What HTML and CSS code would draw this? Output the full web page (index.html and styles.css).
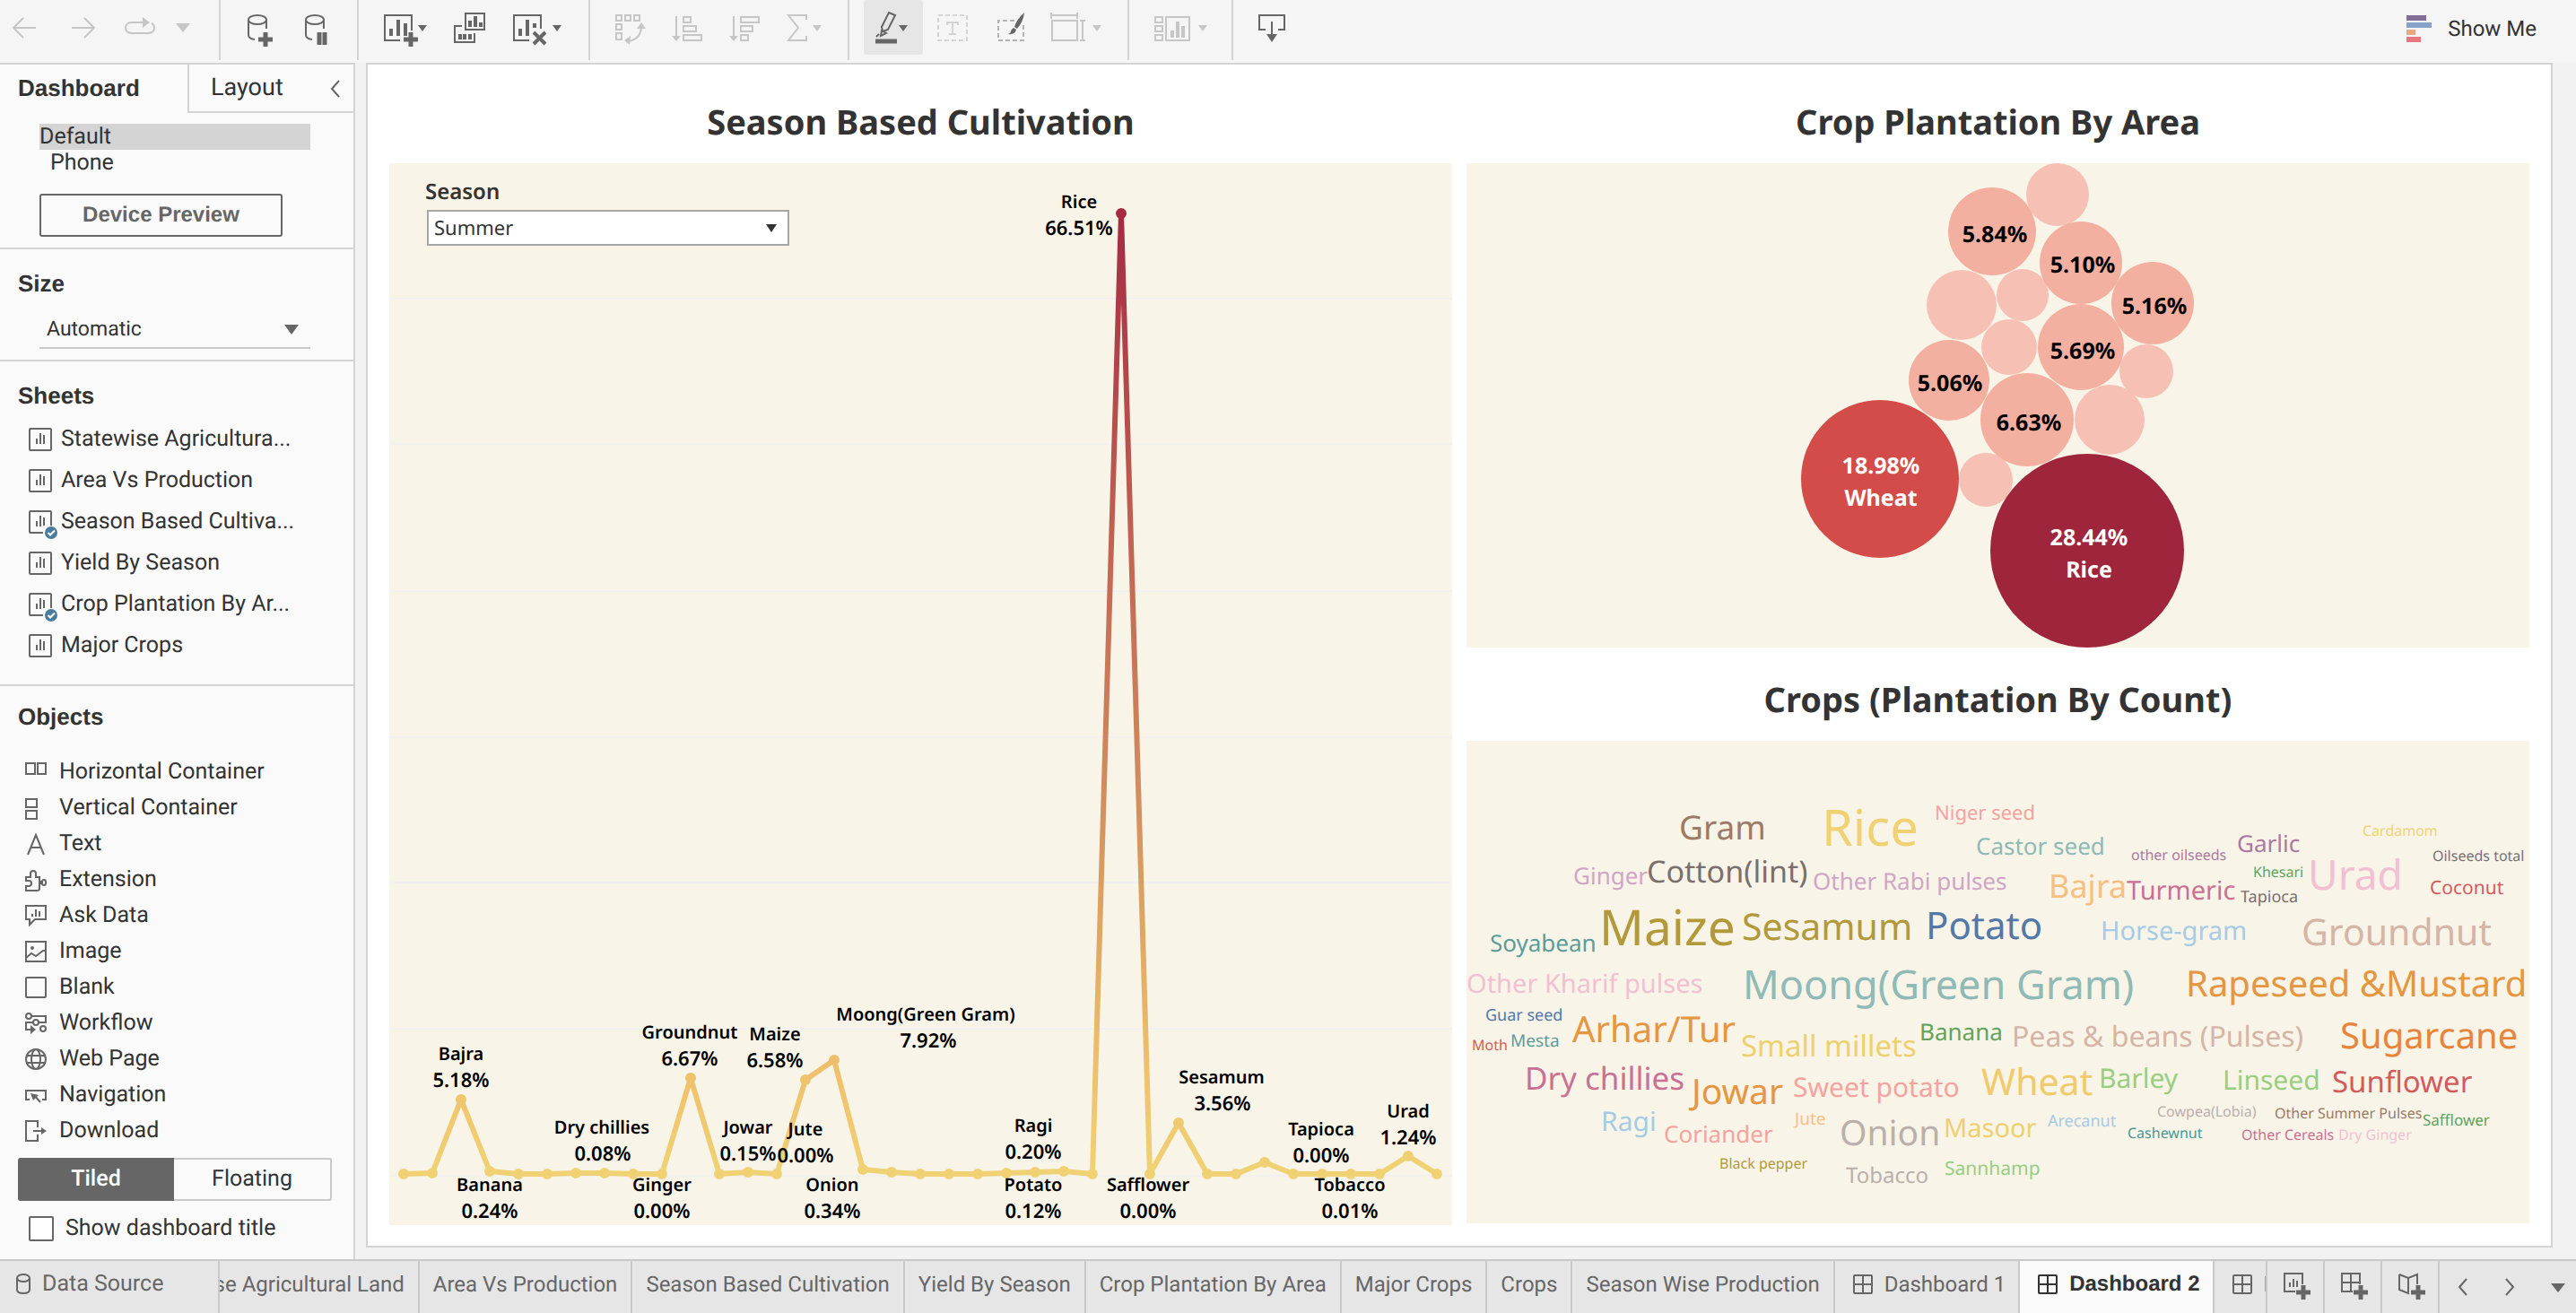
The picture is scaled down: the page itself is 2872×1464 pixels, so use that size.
FILE: index.html
```html
<!DOCTYPE html>
<html lang="en">
<head>
<meta charset="utf-8">
<meta name="viewport" content="width=device-width, initial-scale=1">
<title>Dashboard 2</title>
<link rel="stylesheet" href="styles.css">
</head>
<body>
<svg class="defs" aria-hidden="true">
  <symbol id="sheet" viewBox="0 0 26 26"><rect x="1" y="1" width="24" height="24" rx="1"/><path d="M9 12v6M13 6v12M17 8v10"/></symbol>
  <symbol id="sheet-used" viewBox="0 0 32 32"><path d="M25 17V2a1 1 0 0 0-1-1H2a1 1 0 0 0-1 1v22a1 1 0 0 0 1 1h14M9 12v6M13 6v12M17 8v9"/><circle class="badge" cx="25" cy="25" r="7"/><path class="tick" d="M21.500 25l2.500 2.500 5-5"/></symbol>
  <symbol id="grid" viewBox="0 0 22 22"><rect x="1" y="1" width="20" height="20" rx="1"/><path d="M11 1v20M1 11h20"/></symbol>
</svg>

<header class="toolbar">
  <div class="group group-first">
    <button class="tool off" aria-label="Undo"><svg width="38" height="60"><path d="M26 30H1M12 19L1 30l11 11"/></svg></button>
    <button class="tool off" aria-label="Redo"><svg width="30" height="60"><path d="M0 30h25M14 19l11 11-11 11"/></svg></button>
    <button class="tool off" aria-label="Replay"><svg width="74" height="60"><path d="M25 24H8a6 6 0 0 0-6 6v0a6 6 0 0 0 6 6h20a6 6 0 0 0 6-6v0q0-4-3-5"/><path class="fill" d="M21 18l8 6-8 6zM58 25h16l-8 10z"/></svg></button>
  </div>
  <div class="group">
    <button class="tool" aria-label="New data source"><svg width="38" height="60"><ellipse cx="13" cy="21" rx="10" ry="5"/><path d="M3 21v17q0 4 7 5M23 21v10"/><path class="heavy" d="M22 35v16M14 43h16"/></svg></button>
    <button class="tool" aria-label="Pause auto updates"><svg width="30" height="60"><ellipse cx="11" cy="21" rx="10" ry="5"/><path d="M1 21v17q0 4 7 5M21 21v10"/><path class="heavy" d="M16 35v14M22 35v14"/></svg></button>
  </div>
  <div class="group">
    <button class="tool" aria-label="New worksheet"><svg width="50" height="60"><path d="M31 33V16H1v28h17"/><path class="mid" d="M8 31v8M16 21v18M24 25v14"/><path class="heavy" d="M30 35v16M22 43h16"/><path class="fill" d="M38 27h10l-5 7z"/></svg></button>
    <button class="tool" aria-label="Duplicate"><svg width="38" height="60"><path d="M13 14h21v18H13zM9 28H1v18h22V36"/><path class="mid" d="M18 22v7M24 17v12M30 24v5M7 37v6M12 37v6M18 37v6"/></svg></button>
    <button class="tool" aria-label="Clear sheet"><svg width="56" height="60"><path d="M31 31V16H1v28h17"/><path class="mid" d="M8 31v8M16 21v18M24 25v5M23 35l13 13M36 35L23 48"/><path class="fill" d="M44 27h10l-5 7z"/></svg></button>
  </div>
  <div class="group">
    <button class="tool off" aria-label="Swap"><svg width="35" height="60"><path d="M1 16h6v6H1zM11 16h6v6h-6zM21 16h6v6h-6zM1 26h6v6H1zM1 36h6v7H1zM29 28q0 14-14 17"/><path class="fill" d="M24 31l5-7 5 7zM17 39l-7 5 6 5z"/></svg></button>
    <button class="tool off" aria-label="Sort ascending"><svg width="36" height="60"><path d="M5 17v24M13 18h8v6h-8zM13 28h14v6H13zM13 38h20v6H13z"/><path class="fill" d="M0 39h10l-5 6z"/></svg></button>
    <button class="tool off" aria-label="Sort descending"><svg width="34" height="60"><path d="M5 17v24M13 18h20v6H13zM13 28h13v6H13zM13 38h8v6h-8z"/><path class="fill" d="M0 39h10l-5 6z"/></svg></button>
    <button class="tool off" aria-label="Totals"><svg width="42" height="60"><path d="M24 21v-5H4l11 14L4 44h20v-5"/><path class="fill" d="M31 27h10l-5 7z"/></svg></button>
  </div>
  <div class="group">
    <button class="tool pressed" aria-label="Highlight"><svg width="42" height="60"><path d="M16 13l7 3-8 16-6 2-1-5zM8 33l5 3-6 3zM2 40l3-3"/><path class="heavy" d="M1 45h24"/><path class="fill" d="M27 27h10l-5 7z"/></svg></button>
    <button class="tool faint" aria-label="Show mark labels"><svg width="34" height="60"><rect class="dash" x="1" y="16" width="32" height="28"/><path d="M11 27v-3h12v3M17 24v13M13 37h8"/></svg></button>
    <button class="tool" aria-label="Format"><svg width="36" height="60"><path class="dash dim" d="M24 22H6v22h28V26"/><path class="fill" d="M35 13q-9 8-11 16l3 2q7-8 8-18zM23 30l3 2q-1 6-9 5 3-1 3-3t3-4z"/></svg></button>
    <button class="tool off" aria-label="Fit"><svg width="58" height="60"><path d="M1 13v7M30 13v7M1 16h29M2 22h28v22H2zM33 22h6M33 44h6M36 22v22"/><path class="fill" d="M47 27h10l-5 7z"/></svg></button>
  </div>
  <div class="group">
    <button class="tool off" aria-label="Show cards"><svg width="58" height="60"><path d="M1 18h8v6H1zM1 28h8v6H1zM1 38h8v6H1zM13 18h26v26H13z"/><path class="mid" d="M20 33v8M26 23v18M32 28v13"/><path class="fill" d="M49 27h10l-5 7z"/></svg></button>
  </div>
  <div class="group group-last">
    <button class="tool" aria-label="Download"><svg width="30" height="60"><path d="M8 32H1V16h28v16h-7M15 23v16"/><path class="fill" d="M9 37h12l-6 9z"/></svg></button>
  </div>
  <button class="show-me"><svg width="28" height="30"><rect width="22" height="6" fill="#836f96"/><rect y="8" width="28" height="6" fill="#87a3c8"/><rect y="16" width="10" height="6" fill="#e8a883"/><rect y="24" width="16" height="6" fill="#e9767f"/></svg>Show Me</button>
</header>

<div class="workspace">
  <aside class="sidebar">
    <div class="side-tabs">
      <button class="side-tab active">Dashboard</button>
      <button class="side-tab">Layout</button>
      <button class="collapse" aria-label="Collapse"><svg width="12" height="20"><path d="M10 1L2 10l8 9"/></svg></button>
    </div>
    <section class="devices">
      <ul class="device-list"><li class="selected">Default</li><li class="nested">Phone</li></ul>
      <button class="preview">Device Preview</button>
    </section>
    <section class="size">
      <h2><label for="size">Size</label></h2>
      <span class="picker size-picker"><select id="size"><option>Automatic</option></select></span>
    </section>
    <section class="sheets">
      <h2>Sheets</h2>
      <ul>
        <li><svg class="icon26"><use href="#sheet"/></svg><span>Statewise Agricultura...</span></li>
        <li><svg class="icon26"><use href="#sheet"/></svg><span>Area Vs Production</span></li>
        <li><svg class="icon26"><use href="#sheet-used" width="32" height="32"/></svg><span>Season Based Cultiva...</span></li>
        <li><svg class="icon26"><use href="#sheet"/></svg><span>Yield By Season</span></li>
        <li><svg class="icon26"><use href="#sheet-used" width="32" height="32"/></svg><span>Crop Plantation By Ar...</span></li>
        <li><svg class="icon26"><use href="#sheet"/></svg><span>Major Crops</span></li>
      </ul>
    </section>
    <section class="objects">
      <h2>Objects</h2>
      <ul>
        <li><svg class="icon24"><path d="M1 2h10v12H1zM14 2h9v12h-9z"/></svg>Horizontal Container</li>
        <li><svg class="icon24"><path d="M1 2h12v9H1zM1 15h12v9H1z"/></svg>Vertical Container</li>
        <li><svg class="icon24"><path d="M3 24L12 2l9 22M6 16h12"/></svg>Text</li>
        <li><svg class="icon24"><path d="M1 9h5V5a3 3 0 0 1 6 0v4h4v5h3a2 2 0 0 1 4 0v2a2 2 0 0 1-4 0h-3v6q0 2-3 2H1v-5h3a3 3 0 0 0 0-6H1z"/></svg>Extension</li>
        <li><svg class="icon24"><path d="M1 1h22v15H11l-6 6v-6H1zM8 10v3M12 5v8M16 7v6"/></svg>Ask Data</li>
        <li><svg class="icon24"><path d="M1 1h22v22H1zM1 19l6-5 5 3 8-6h3"/><circle class="fill" cx="8" cy="8" r="2"/></svg>Image</li>
        <li><svg class="icon24"><rect x="1" y="1" width="22" height="22" rx="1"/></svg>Blank</li>
        <li><svg class="icon24"><circle cx="4" cy="4" r="3"/><circle cx="12" cy="11" r="3"/><circle cx="20" cy="18" r="3"/><path d="M7 4h16v7h-8M9 11H1v8h7"/><path class="fill" d="M6 14l6 5-6 5z"/></svg>Workflow</li>
        <li><svg class="icon24"><circle cx="12" cy="12" r="11"/><ellipse cx="12" cy="12" rx="5" ry="11"/><path d="M2 8h20M2 16h20"/></svg>Web Page</li>
        <li><svg class="icon24"><path d="M5 17H1V7h22v10h-4M10 12l7 8"/><path class="fill" d="M6 10l9 2-6 6z"/></svg>Navigation</li>
        <li><svg class="icon24"><path d="M14 8V1H1v22h13v-7M9 12h11"/><path class="fill" d="M18 8l6 4-6 4z"/></svg>Download</li>
      </ul>
      <div class="segmented"><button class="on">Tiled</button><button>Floating</button></div>
      <div class="check"><input type="checkbox" id="title-toggle"><label for="title-toggle">Show dashboard title</label></div>
    </section>
  </aside>

  <main class="canvas">
    <section class="season">
      <h1>Season Based Cultivation</h1>
      <div class="panel">
        <div class="filter">
          <label for="season">Season</label>
          <span class="picker season-picker"><select id="season"><option>Summer</option></select></span>
        </div>
        <svg class="chart" viewBox="0 0 1185 1184" role="img" aria-label="Share of cultivation by crop">
          <defs>
            <linearGradient id="heat" gradientUnits="userSpaceOnUse" x1="0" y1="56" x2="0" y2="1127">
              <stop offset="0" stop-color="#a52a42"/><stop offset=".07" stop-color="#ab3647"/><stop offset=".39" stop-color="#c56b54"/><stop offset=".52" stop-color="#cc7f5b"/><stop offset=".77" stop-color="#e0ab64"/><stop offset=".89" stop-color="#efc06c"/><stop offset="1" stop-color="#f0d274"/>
            </linearGradient>
          </defs>
          <path class="gridline" d="M0 151H1185M0 313H1185M0 477H1185M0 640H1185M0 802H1185M0 965H1185M0 1129H1185"/>
          <path class="line" stroke="url(#heat)" d="M16 1127L48 1126L80 1044L112 1124L144 1127L176 1127L208 1126L240 1126L272 1127L304 1127L336 1020L368 1127L400 1125L432 1127L464 1022L496 1000L528 1122L560 1125L592 1127L624 1127L656 1127L688 1126L720 1125L752 1124L784 1127L816 56L848 1127L880 1070L912 1127L944 1127L976 1114L1008 1127L1040 1127L1072 1127L1104 1127L1136 1107L1168 1127"/>
          <path class="dots" stroke="url(#heat)" d="M16 1127h0M48 1126h0M80 1044h0M112 1124h0M144 1127h0M176 1127h0M208 1126h0M240 1126h0M272 1127h0M304 1127h0M336 1020h0M368 1127h0M400 1125h0M432 1127h0M464 1022h0M496 1000h0M528 1122h0M560 1125h0M592 1127h0M624 1127h0M656 1127h0M688 1126h0M720 1125h0M752 1124h0M784 1127h0M816 56h0M848 1127h0M880 1070h0M912 1127h0M944 1127h0M976 1114h0M1008 1127h0M1040 1127h0M1072 1127h0M1104 1127h0M1136 1107h0M1168 1127h0"/>
          <g class="names">
            <text x="769" y="50">Rice</text><text x="80" y="1000">Bajra</text><text x="112" y="1146">Banana</text><text x="237" y="1082">Dry chillies</text><text x="304" y="1146">Ginger</text><text x="335" y="976">Groundnut</text><text x="430" y="978">Maize</text><text x="400" y="1082">Jowar</text><text x="464" y="1084">Jute</text><text x="494" y="1146">Onion</text><text x="598" y="956">Moong(Green Gram)</text><text x="718" y="1080">Ragi</text><text x="718" y="1146">Potato</text><text x="846" y="1146">Safflower</text><text x="928" y="1026">Sesamum</text><text x="1039" y="1084">Tapioca</text><text x="1136" y="1064">Urad</text><text x="1071" y="1146">Tobacco</text>
          </g>
          <g class="values">
            <text x="769" y="80">66.51%</text><text x="80" y="1030">5.18%</text><text x="112" y="1176">0.24%</text><text x="238" y="1112">0.08%</text><text x="304" y="1176">0.00%</text><text x="335" y="1006">6.67%</text><text x="430" y="1008">6.58%</text><text x="400" y="1112">0.15%</text><text x="464" y="1114">0.00%</text><text x="494" y="1176">0.34%</text><text x="601" y="986">7.92%</text><text x="718" y="1110">0.20%</text><text x="718" y="1176">0.12%</text><text x="846" y="1176">0.00%</text><text x="929" y="1056">3.56%</text><text x="1039" y="1114">0.00%</text><text x="1136" y="1094">1.24%</text><text x="1071" y="1176">0.01%</text>
          </g>
        </svg>
      </div>
    </section>

    <div class="right">
      <section>
        <h1>Crop Plantation By Area</h1>
        <div class="panel">
          <svg class="chart" viewBox="0 0 1185 540" role="img" aria-label="Crop plantation by area">
            <g fill="#f6c1b4"><circle cx="659" cy="35" r="35"/><circle cx="552" cy="158" r="39"/><circle cx="620" cy="147" r="29"/><circle cx="605" cy="205" r="31"/><circle cx="758" cy="232" r="30"/><circle cx="717" cy="286" r="39"/><circle cx="579" cy="353" r="30"/></g>
            <g fill="#f3af9f"><circle cx="586" cy="76" r="49"/><circle cx="685" cy="111" r="46"/><circle cx="765" cy="156" r="46"/><circle cx="685" cy="205" r="48"/><circle cx="538" cy="242" r="45"/><circle cx="625" cy="286" r="52"/></g>
            <circle cx="461" cy="352" r="88" fill="#d34c4a"/><circle cx="692" cy="432" r="108" fill="#9e253b"/>
            <g class="bubble"><text x="589" y="88">5.84%</text><text x="687" y="122">5.10%</text><text x="767" y="168">5.16%</text><text x="687" y="218">5.69%</text><text x="539" y="254">5.06%</text><text x="627" y="298">6.63%</text></g>
            <g class="bubble light"><text x="462" y="346">18.98%</text><text x="462" y="382">Wheat</text><text x="694" y="426">28.44%</text><text x="694" y="462">Rice</text></g>
          </svg>
        </div>
      </section>
      <section>
        <h1>Crops (Plantation By Count)</h1>
        <div class="panel">
          <svg class="chart cloud" viewBox="0 0 1185 538" role="img" aria-label="Crops by plantation count">
            <text x="237" y="110" font-size="37" fill="#9c7a66">Gram</text>
            <text x="396" y="117" font-size="56" fill="#f0d274">Rice</text>
            <text x="522" y="88" font-size="22" fill="#f4a3a0">Niger seed</text>
            <text x="568" y="127" font-size="26" fill="#8fbab5">Castor seed</text>
            <text x="859" y="124" font-size="26" fill="#a97a9f">Garlic</text>
            <text x="999" y="106" font-size="16" fill="#efd276">Cardamom</text>
            <text x="1077" y="134" font-size="16" fill="#79706e">Oilseeds total</text>
            <text x="741" y="133" font-size="16" fill="#a97a9f">other oilseeds</text>
            <text x="877" y="152" font-size="16" fill="#60a35a">Khesari</text>
            <text x="863" y="180" font-size="18" fill="#79706e">Tapioca</text>
            <text x="938" y="166" font-size="46" fill="#f2c0d3">Urad</text>
            <text x="1074" y="171" font-size="21" fill="#d45a5c">Coconut</text>
            <text x="119" y="160" font-size="26" fill="#d0a6c6">Ginger</text>
            <text x="201" y="158" font-size="34" fill="#79706e">Cotton(lint)</text>
            <text x="386" y="166" font-size="26" fill="#d0a6c6">Other Rabi pulses</text>
            <text x="649" y="175" font-size="36" fill="#f6c083">Bajra</text>
            <text x="736" y="177" font-size="29" fill="#c97093">Turmeric</text>
            <text x="26" y="235" font-size="26" fill="#5b9d98">Soyabean</text>
            <text x="148" y="228" font-size="55" fill="#b29a3b">Maize</text>
            <text x="307" y="222" font-size="41" fill="#b29a3b">Sesamum</text>
            <text x="512" y="221" font-size="42" fill="#5278a8">Potato</text>
            <text x="707" y="222" font-size="29" fill="#a6cbe5">Horse-gram</text>
            <text x="931" y="228" font-size="41" fill="#d5b5a5">Groundnut</text>
            <text x="0" y="281" font-size="29" fill="#f2c0d3">Other Kharif pulses</text>
            <text x="308" y="288" font-size="45" fill="#8fbab5">Moong(Green Gram)</text>
            <text x="802" y="285" font-size="40" fill="#e6963f">Rapeseed &amp;Mustard</text>
            <text x="21" y="312" font-size="18" fill="#5278a8">Guar seed</text>
            <text x="6" y="345" font-size="16" fill="#d45a5c">Moth</text>
            <text x="49" y="341" font-size="19" fill="#5b9d98">Mesta</text>
            <text x="118" y="336" font-size="40" fill="#e6963f">Arhar/Tur</text>
            <text x="306" y="352" font-size="33" fill="#edd06f">Small millets</text>
            <text x="505" y="334" font-size="26" fill="#60a35a">Banana</text>
            <text x="608" y="341" font-size="32" fill="#d5b5a5">Peas &amp; beans (Pulses)</text>
            <text x="974" y="343" font-size="40" fill="#e6853b">Sugarcane</text>
            <text x="65" y="389" font-size="35" fill="#c97093">Dry chillies</text>
            <text x="251" y="405" font-size="39" fill="#e6963f">Jowar</text>
            <text x="364" y="397" font-size="30" fill="#f4a3a0">Sweet potato</text>
            <text x="574" y="395" font-size="41" fill="#f0ca6b">Wheat</text>
            <text x="705" y="387" font-size="30" fill="#98ce82">Barley</text>
            <text x="843" y="389" font-size="30" fill="#98ce82">Linseed</text>
            <text x="965" y="392" font-size="33" fill="#d45a5c">Sunflower</text>
            <text x="150" y="435" font-size="30" fill="#a6cbe5">Ragi</text>
            <text x="220" y="448" font-size="26" fill="#f4a3a0">Coriander</text>
            <text x="366" y="428" font-size="19" fill="#f6c083">Jute</text>
            <text x="416" y="451" font-size="39" fill="#b9b0ac">Onion</text>
            <text x="532" y="442" font-size="29" fill="#edd06f">Masoor</text>
            <text x="648" y="430" font-size="18" fill="#a6cbe5">Arecanut</text>
            <text x="770" y="419" font-size="16" fill="#b9b0ac">Cowpea(Lobia)</text>
            <text x="901" y="421" font-size="16" fill="#9c7a66">Other Summer Pulses</text>
            <text x="1066" y="429" font-size="17" fill="#60a35a">Safflower</text>
            <text x="737" y="443" font-size="16" fill="#499894">Cashewnut</text>
            <text x="864" y="445" font-size="16" fill="#c97093">Other Cereals</text>
            <text x="972" y="445" font-size="16" fill="#f2c0d3">Dry Ginger</text>
            <text x="282" y="477" font-size="16" fill="#b29a3b">Black pepper</text>
            <text x="423" y="493" font-size="24" fill="#b9b0ac">Tobacco</text>
            <text x="533" y="484" font-size="21" fill="#98ce82">Sannhamp</text>
          </svg>
        </div>
      </section>
    </div>
  </main>
</div>

<nav class="tabbar" aria-label="Sheets">
  <a class="tab source" href="#"><svg width="16" height="24"><ellipse cx="8" cy="5" rx="7" ry="4"/><path d="M1 5v13q0 4 7 4t7-4V5"/></svg>Data Source</a>
  <div class="strip">
    <div class="strip-inner">
      <a class="tab" href="#">Statewise Agricultural Land</a>
      <a class="tab" href="#">Area Vs Production</a>
      <a class="tab" href="#">Season Based Cultivation</a>
      <a class="tab" href="#">Yield By Season</a>
      <a class="tab" href="#">Crop Plantation By Area</a>
      <a class="tab" href="#">Major Crops</a>
      <a class="tab" href="#">Crops</a>
      <a class="tab" href="#">Season Wise Production</a>
      <a class="tab board" href="#"><svg width="22" height="22"><use href="#grid"/></svg>Dashboard 1</a>
      <a class="tab board current" href="#" aria-current="page"><svg width="22" height="22"><use href="#grid"/></svg>Dashboard 2</a>
      <a class="tab board" href="#"><svg width="22" height="22"><use href="#grid"/></svg>Dashboard 3</a>
    </div>
  </div>
  <button class="add" aria-label="New worksheet"><svg width="30" height="30"><path d="M21 13V1H1v20h12M7 11v5M11 7v9M15 9v7"/><path class="heavy" d="M22 14v16M14 22h16"/></svg></button>
  <button class="add" aria-label="New dashboard"><svg width="30" height="30"><path d="M21 13V1H1v20h12M11 1v20M1 11h20"/><path class="heavy" d="M22 14v16M14 22h16"/></svg></button>
  <button class="add" aria-label="New story"><svg width="30" height="30"><path d="M1 2l10 4 10-4v11M1 2v17l10 4V6"/><path class="heavy" d="M22 14v16M14 22h16"/></svg></button>
  <div class="pager">
    <button aria-label="Previous"><svg width="12" height="20"><path d="M10 1L2 10l8 9"/></svg></button>
    <button aria-label="Next"><svg width="12" height="20"><path d="M2 1l8 9-8 9"/></svg></button>
    <button aria-label="All sheets"><svg width="16" height="20"><path class="fill" d="M0 6h16l-8 10z"/></svg></button>
  </div>
</nav>
</body>
</html>
```
FILE: styles.css
```css
* { box-sizing: border-box; }

body {
  margin: 0;
  min-height: 100vh;
  display: flex;
  flex-direction: column;
  background: #f2f2f2;
  color: #333;
  font: 25px/30px Roboto, "Liberation Sans", sans-serif;
  text-rendering: geometricPrecision;
}

button, select, input { font: inherit; color: inherit; margin: 0; text-rendering: inherit; }
button { border: 0; padding: 0; background: none; }
ul { list-style: none; margin: 0; padding: 0; }
a { color: inherit; text-decoration: none; }
svg { display: block; fill: none; stroke: #666; stroke-width: 2; overflow: visible; flex: none; }
svg .fill { fill: currentColor; stroke: none; }
.defs { position: absolute; width: 0; height: 0; }

/* Toolbar */
.toolbar { display: flex; align-items: flex-start; height: 70px; background: #f5f5f5; }
.group { display: flex; gap: 4px; height: 67px; padding: 0 16px; border-right: 2px solid #d4d4d4; }
.group-first { padding: 0 20px 0 2px; }
.group-last { border: 0; }
.tool { height: 61px; padding: 0 12px; color: #666; }
.tool svg { stroke: currentColor; }
.tool.off { color: #c6c6c6; }
.tool.faint { color: #d4d4d4; }
.tool.pressed { background: #e6e6e6; border-radius: 3px; }
.heavy { stroke-width: 5; }
.mid { stroke-width: 4; }
.dash { stroke-dasharray: 5 3; }
.dim { stroke: #b4b4b4; }
.show-me { display: flex; align-items: center; gap: 18px; height: 64px; margin-left: auto; padding-right: 44px; font-size: 24px; }
.show-me svg { stroke: none; }

/* Workspace */
.workspace { flex: 1; display: flex; gap: 12px; padding-right: 26px; }
.sidebar {
  flex: none;
  width: 396px;
  background: #fafafa;
  border-top: 2px solid #d4d4d4;
  border-right: 2px solid #d4d4d4;
}
.side-tabs { display: flex; height: 54px; }
.side-tab { font-size: 27px; padding-bottom: 2px; }
.side-tab.active {
  width: 209px;
  padding-left: 20px;
  text-align: left;
  font: bold 26px/30px "Liberation Sans", sans-serif;
}
.side-tab:not(.active) {
  flex: 1;
  padding-left: 24px;
  text-align: left;
  border-left: 2px solid #d4d4d4;
  border-bottom: 2px solid #d4d4d4;
}
.collapse { padding: 2px 14px 0; border-bottom: 2px solid #d4d4d4; }
.sidebar section + section { border-top: 2px solid #d4d4d4; }
.sidebar h2 { margin: 0; padding-left: 20px; font: bold 26px/32px "Liberation Sans", sans-serif; }

.devices { padding: 12px 48px 12px 44px; }
.device-list li { height: 29px; line-height: 30px; }
.device-list .nested { padding-left: 12px; }
.selected { background: #d4d4d4; }
.preview {
  width: 271px;
  height: 48px;
  margin-top: 20px;
  border: 2px solid #666;
  border-radius: 3px;
  color: #666;
  font: bold 24px/30px "Liberation Sans", sans-serif;
}

.picker { position: relative; display: block; }
.picker select { appearance: none; display: block; width: 100%; outline: 0; }
.picker::after {
  content: "";
  position: absolute;
  top: 17px;
  right: 13px;
  border: 8px solid transparent;
  border-top: 11px solid #666;
  border-bottom: 0;
}
.size { padding: 22px 0 12px; }
.size-picker { width: 302px; margin: 13px 0 0 44px; }
.size-picker select {
  height: 44px;
  padding: 2px 0 0 8px;
  border: 0;
  border-bottom: 2px solid #c9c9c9;
  background: none;
  font-size: 23px;
}

.sheets { padding: 22px 0 21px; }
.sheets ul { margin-top: 9px; }
.sheets li { display: flex; align-items: center; gap: 10px; height: 46px; padding: 2px 0 0 32px; }
.icon26 { width: 26px; height: 26px; }
.badge { fill: #4a7d9d; stroke: none; }
.tick { stroke: #fff; }

.objects { padding: 18px 0 12px; }
.objects ul { margin-top: 25px; }
.objects li { display: flex; align-items: center; gap: 14px; height: 40px; padding: 2px 0 0 28px; }
.icon24 { width: 24px; height: 24px; color: #666; }
.segmented { display: flex; width: 350px; height: 48px; margin: 11px 0 0 20px; border: 2px solid #c9c9c9; border-radius: 3px; }
.segmented button { flex: 1; }
.segmented .on { margin: -2px 0 -2px -2px; background: #666; color: #fff; font-weight: 500; border-radius: 3px 0 0 3px; }
.check { display: flex; align-items: center; gap: 13px; margin: 16px 0 0 32px; }
.check input { appearance: none; width: 28px; height: 28px; border: 2px solid #666; border-radius: 2px; background: #fff; }

/* Dashboard canvas */
.canvas {
  flex: 1;
  align-self: flex-start;
  display: grid;
  grid-template-columns: 1fr 1fr;
  gap: 16px;
  padding: 6px 24px 23px;
  background: #fff;
  border: 2px solid #d4d4d4;
}
.canvas h1 {
  margin: 0;
  padding-top: 12px;
  text-align: center;
  font: bold 38px/92px "Noto Sans", sans-serif;
}
.panel { position: relative; background: #f9f4e8; }
.chart { width: 100%; height: auto; stroke: none; font-family: "Noto Sans", sans-serif; }
.filter { position: absolute; top: 16px; left: 40px; font-family: "Noto Sans", sans-serif; }
.filter label { display: block; font-size: 24px; line-height: 32px; font-weight: 600; }
.season-picker { width: 404px; margin: 4px 0 0 2px; }
.season-picker select {
  height: 40px;
  padding: 0 6px;
  border: 2px solid #a6a6a6;
  background: #fff;
  font-size: 22px;
}
.season-picker::after { top: 16px; right: 14px; border-width: 9px 6px 0; border-top-color: #333; }

.gridline { stroke: #f2f1ef; stroke-width: 2; }
.line { fill: none; stroke-width: 6; stroke-linejoin: bevel; }
.dots { stroke-width: 12; stroke-linecap: round; }
.names, .values { fill: #000; font-size: 20px; font-weight: 600; text-anchor: middle; }
.values { font-size: 22px; }
.bubble { fill: #000; font-size: 25px; font-weight: 700; text-anchor: middle; }
.bubble.light { fill: #fff; }

/* Sheet tabs */
.tabbar { display: flex; height: 60px; background: #e6e6e6; border-top: 2px solid #c9c9c9; color: #666; }
.tab {
  flex: none;
  display: flex;
  align-items: center;
  padding: 0 15px 6px;
  border-right: 2px solid #c9c9c9;
  font-size: 24px;
  white-space: nowrap;
}
.source { width: 245px; padding-left: 18px; gap: 13px; font-size: 25px; }
.strip { flex: 1; min-width: 0; overflow: hidden; border-right: 2px solid #c9c9c9; }
.strip-inner { display: flex; height: 100%; margin-left: -101px; }
.board { padding: 0 14px 6px 20px; gap: 13px; }
.current { background: #fafafa; color: #333; font: bold 24px/30px "Liberation Sans", sans-serif; }
.current svg { stroke: #333; }
.add { width: 64px; padding: 0 0 2px 18px; border-right: 2px solid #c9c9c9; }
.pager { display: flex; align-items: center; gap: 40px; padding: 0 12px 0 20px; color: #666; }
```
